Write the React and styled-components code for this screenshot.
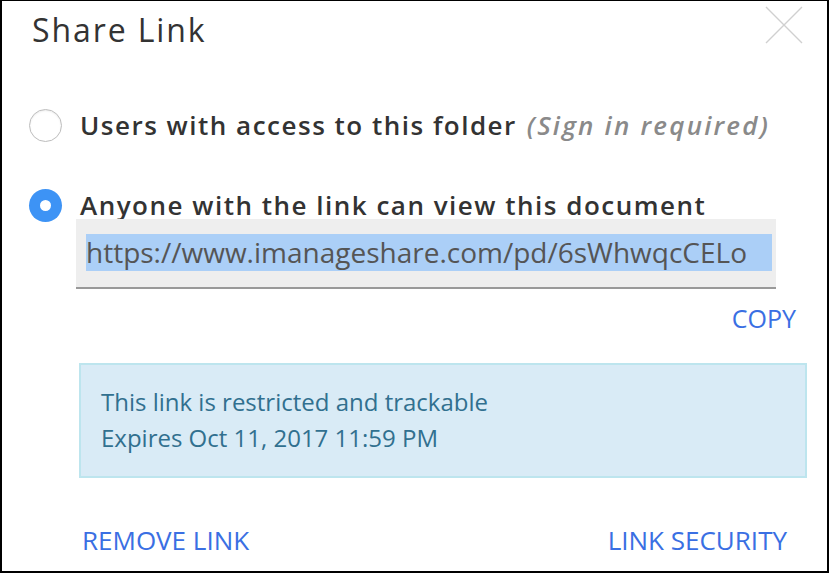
import React from "react";
import styled, { createGlobalStyle } from "styled-components";

const Global = createGlobalStyle`
  html, body { margin: 0; padding: 0; background: #fff; }
  body { font-family: "Open Sans", "Liberation Sans", sans-serif; }
  * { box-sizing: border-box; }
`;

const Frame = styled.div`
  width: 829px;
  height: 573px;
  border-style: solid;
  border-color: #000;
  border-width: 1px 2px 2px 2px;
  background: #fff;
  display: flex;
  flex-direction: column;
`;

const Header = styled.div`
  display: flex;
  align-items: flex-start;
  justify-content: space-between;
  padding: 5px 24px 0 30px;
  height: 58px;
`;

const Title = styled.h1`
  margin: 2px 0 0 0;
  font-weight: 400;
  font-size: 32px;
  letter-spacing: 1.9px;
  color: #333;
  line-height: 44px;
`;

const Close = styled.button`
  border: 0;
  background: none;
  padding: 0;
  width: 38px;
  height: 38px;
  cursor: pointer;
  display: flex;
`;

const Body = styled.div`
  display: flex;
  flex-direction: column;
  padding: 0 0 0 27px;
`;

const Option = styled.label`
  display: flex;
  align-items: center;
  gap: 18px;
  height: 34px;
  margin-top: ${(p) => p.$mt}px;
  font-weight: 600;
  font-size: 26px;
  letter-spacing: 1.5px;
  color: #333;
  white-space: nowrap;
`;

const Radio = styled.span`
  width: 33px;
  height: 33px;
  border-radius: 50%;
  flex: none;
  background: ${(p) => (p.$checked ? "#3d93f5" : "#fff")};
  border: ${(p) => (p.$checked ? "none" : "1.5px solid #bdbdbd")};
  box-shadow: ${(p) => (p.$checked ? "none" : "inset 0 1px 2px rgba(0,0,0,0.08)")};
  display: flex;
  align-items: center;
  justify-content: center;
  &::after {
    content: "";
    display: ${(p) => (p.$checked ? "block" : "none")};
    width: 11px;
    height: 11px;
    border-radius: 50%;
    background: #fff;
  }
`;

const Hint = styled.span`
  font-style: italic;
  color: #8a8a8a;
  letter-spacing: 2.2px;
  margin-left: 10px;
`;

const LinkField = styled.div`
  margin: -3px 0 0 47px;
  width: 700px;
  height: 70px;
  background: #eeeeee;
  border-bottom: 2px solid #999;
  display: flex;
  align-items: center;
  padding-left: 10px;
`;

const Selected = styled.span`
  font-size: 28px;
  color: #555;
  background: #abcff7;
  line-height: 37px;
  padding-right: 25px;
  white-space: nowrap;
  margin-top: -2px;
`;

const CopyRow = styled.div`
  display: flex;
  justify-content: flex-end;
  width: 767px;
  margin-top: 14px;
`;

const TextButton = styled.button`
  border: 0;
  background: none;
  padding: 0;
  font-family: inherit;
  font-size: ${(p) => p.$size || 26}px;
  color: #3a6fe3;
  text-transform: uppercase;
  cursor: pointer;
  line-height: 30px;
`;

const Info = styled.div`
  margin: 30px 0 0 50px;
  width: 728px;
  height: 115px;
  background: #d9ebf6;
  border: 2px solid #bde5ee;
  padding: 19px 20px 0 20px;
  color: #31708f;
  font-size: 24px;
  line-height: 36px;
`;

const Footer = styled.div`
  display: flex;
  justify-content: space-between;
  padding: 0 40px 0 80px;
  margin-top: 47px;
`;

export default function App() {
  return (
    <>
      <Global />
      <Frame>
        <Header>
          <Title>Share Link</Title>
          <Close aria-label="Close">
            <svg width="38" height="38" viewBox="0 0 38 38">
              <path d="M1 1 L37 37 M37 1 L1 37" stroke="#d0d0d0" strokeWidth="1.4" fill="none" />
            </svg>
          </Close>
        </Header>
        <Body>
          <Option $mt={49}>
            <Radio />
            <span>
              Users with access to this folder<Hint>(Sign in required)</Hint>
            </span>
          </Option>
          <Option $mt={46}>
            <Radio $checked />
            <span>Anyone with the link can view this document</span>
          </Option>
          <LinkField>
            <Selected>https://www.imanageshare.com/pd/6sWhwqcCELo</Selected>
          </LinkField>
          <CopyRow>
            <TextButton $size={25}>Copy</TextButton>
          </CopyRow>
          <Info>
            <div>This link is restricted and trackable</div>
            <div>Expires Oct 11, 2017 11:59 PM</div>
          </Info>
        </Body>
        <Footer>
          <TextButton>Remove Link</TextButton>
          <TextButton>Link Security</TextButton>
        </Footer>
      </Frame>
    </>
  );
}
